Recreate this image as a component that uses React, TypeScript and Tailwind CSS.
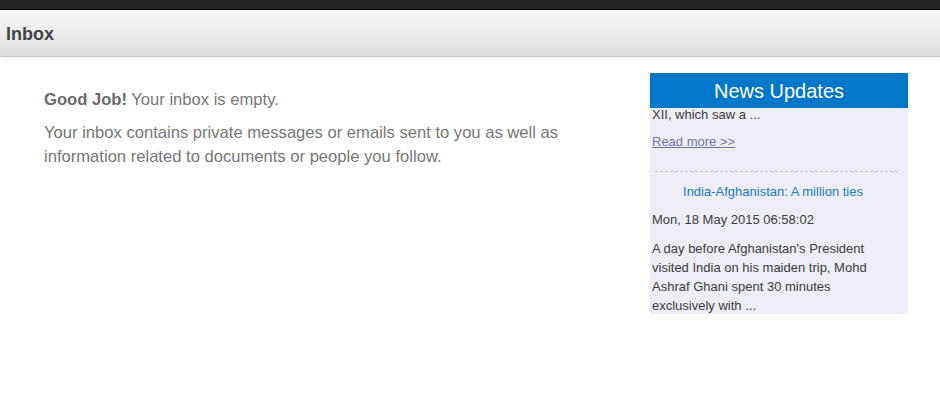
import React from "react";

const news = {
  title: "India-Afghanistan: A million ties",
  date: "Mon, 18 May 2015 06:58:02",
  body: "A day before Afghanistan's President visited India on his maiden trip, Mohd Ashraf Ghani spent 30 minutes exclusively with ...",
};

function NewsPanel() {
  return (
    <div className="w-[258px] shrink-0">
      <div className="h-[35px] bg-[#0077c8] flex items-center justify-center text-white text-[20px] leading-none">
        News Updates
      </div>
      <div className="h-[206px] overflow-hidden bg-[#ededf5] pl-[2px] pr-[14px] text-[13px] text-[#3d3d3d] leading-[19px]">
        <div className="-mt-[3px]">
          <p>XII, which saw a ...</p>
          <a href="#" className="block mt-[8px] text-[#7171b0] underline">
            Read more &gt;&gt;
          </a>
          <div className="ml-[3px] -mr-[4px] mt-[20px] border-t border-dashed border-[#c4c4cc]" />
          <p className="mt-[10px] text-center text-[#1a7cc6]">{news.title}</p>
          <p className="mt-[9px]">{news.date}</p>
          <p className="mt-[10px]">{news.body}</p>
        </div>
      </div>
    </div>
  );
}

export default function App() {
  return (
    <div className="w-[940px] h-[408px] bg-white font-['Liberation_Sans',Arial,sans-serif] overflow-hidden">
      <div className="h-[9px] bg-[#222]" />
      <div className="h-px bg-black" />
      <div className="h-[47px] bg-gradient-to-b from-[#f9f9f9] to-[#dedede] border-b border-[#c9c9c9] flex items-center px-[6px] shadow-[0_2px_6px_rgba(0,0,0,0.06)]">
        <h1 className="text-[18px] font-bold text-[#444] mt-[2px]">Inbox</h1>
      </div>
      <div className="flex pt-[16px]">
        <div className="flex-1 pl-[44px] pt-[15px] text-[16.6px] text-[#777] leading-[24px]">
          <p>
            <b className="text-[#6a6a6a]">Good Job!</b> Your inbox is empty.
          </p>
          <p className="mt-[9px] w-[530px]">
            Your inbox contains private messages or emails sent to you as well as
            information related to documents or people you follow.
          </p>
        </div>
        <div className="pr-[32px]">
          <NewsPanel />
        </div>
      </div>
    </div>
  );
}
